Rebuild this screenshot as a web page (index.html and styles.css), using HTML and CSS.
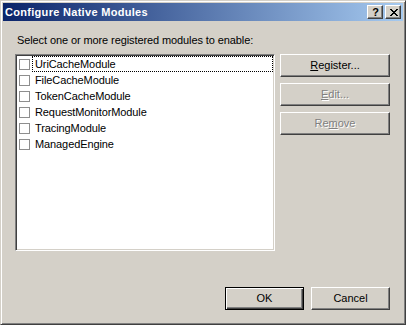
FILE: index.html
```html
<!DOCTYPE html>
<html>
<head>
<meta charset="utf-8">
<link rel="stylesheet" href="styles.css">
</head>
<body>
<div class="window">
  <div class="titlebar">
    <span class="title">Configure Native Modules</span>
    <div class="tb-buttons">
      <div class="tb-btn help">?</div>
      <div class="tb-btn close">
        <svg width="8" height="7" viewBox="0 0 8 7" shape-rendering="crispEdges">
          <path d="M0 0h2v1h-2zM6 0h2v1h-2zM1 1h2v1h-2zM5 1h2v1h-2zM2 2h4v1h-4zM3 3h2v1h-2zM2 4h4v1h-4zM1 5h2v1h-2zM5 5h2v1h-2zM0 6h2v1h-2zM6 6h2v1h-2z" fill="#000"/>
        </svg>
      </div>
    </div>
  </div>
  <div class="content">
    <div class="label">Select one or more registered modules to enable:</div>
    <div class="main">
      <div class="listbox">
        <div class="row"><span class="check"></span><span class="text focus">UriCacheModule</span></div>
        <div class="row"><span class="check"></span><span class="text">FileCacheModule</span></div>
        <div class="row"><span class="check"></span><span class="text">TokenCacheModule</span></div>
        <div class="row"><span class="check"></span><span class="text">RequestMonitorModule</span></div>
        <div class="row"><span class="check"></span><span class="text">TracingModule</span></div>
        <div class="row"><span class="check"></span><span class="text">ManagedEngine</span></div>
      </div>
      <div class="side">
        <div class="btn"><span><u>R</u>egister...</span></div>
        <div class="btn disabled"><span><u>E</u>dit...</span></div>
        <div class="btn disabled"><span>Re<u>m</u>ove</span></div>
      </div>
    </div>
    <div class="footer">
      <div class="btn default"><span>OK</span></div>
      <div class="btn footer-btn"><span>Cancel</span></div>
    </div>
  </div>
</div>
</body>
</html>
```

FILE: styles.css
```css
html, body {
  margin: 0;
  padding: 0;
  background: #d4d0c8;
}

.window {
  box-sizing: border-box;
  width: 406px;
  height: 325px;
  background: #d4d0c8;
  border: 1px solid;
  border-color: #d4d0c8 #404040 #404040 #d4d0c8;
  box-shadow: inset 1px 1px #ffffff, inset -1px -1px #808080;
  padding: 2px;
  display: flex;
  flex-direction: column;
  font-family: "Liberation Sans", Arial, sans-serif;
  font-size: 11px;
  color: #000;
}

.titlebar {
  height: 18px;
  background: linear-gradient(to right, #0a246a, #a6caf0);
  display: flex;
  align-items: center;
  justify-content: space-between;
  padding: 0 2px 0 2px;
}

.title {
  color: #fff;
  font-weight: bold;
  font-size: 11px;
  letter-spacing: 0.3px;
}

.tb-buttons {
  display: flex;
  gap: 2px;
}

.tb-btn {
  box-sizing: border-box;
  width: 16px;
  height: 14px;
  background: #d4d0c8;
  border: 1px solid;
  border-color: #fff #404040 #404040 #fff;
  box-shadow: inset -1px -1px #808080;
  display: flex;
  align-items: center;
  justify-content: center;
  font-weight: bold;
  font-size: 11px;
  line-height: 1;
}

.help {
  padding-left: 1px;
}

.close svg {
  display: block;
  margin-left: 1px;
}

.content {
  flex: 1;
  display: flex;
  flex-direction: column;
  padding: 12px 13px 12px 12px;
}

.label {
  line-height: 13px;
  margin-left: 2px;
  padding-top: 1px;
  letter-spacing: -0.1px;
}

.main {
  display: flex;
  gap: 5px;
  margin-top: 7px;
}

.listbox {
  box-sizing: border-box;
  width: 260px;
  height: 197px;
  background: #fff;
  border: 1px solid;
  border-color: #808080 #fff #fff #808080;
  box-shadow: inset 1px 1px #404040, inset -1px -1px #d4d0c8;
  padding: 1px;
}

.row {
  height: 16px;
  display: flex;
  align-items: center;
}

.check {
  box-sizing: border-box;
  width: 11px;
  height: 11px;
  border: 1px solid #8e8e8e;
  margin-left: 2px;
  margin-right: 2px;
  margin-top: 1px;
  background: #fff;
}

.text {
  box-sizing: border-box;
  flex: 1;
  height: 16px;
  line-height: 15px;
  padding-left: 2px;
  border: 1px solid transparent;
  letter-spacing: -0.1px;
}

.text.focus {
  border: 1px dotted #000;
}

.side {
  display: flex;
  flex-direction: column;
  gap: 6px;
}

.btn {
  box-sizing: border-box;
  width: 110px;
  height: 23px;
  background: #d4d0c8;
  border: 1px solid;
  border-color: #fff #404040 #404040 #fff;
  box-shadow: inset -1px -1px #808080;
  display: flex;
  align-items: center;
  justify-content: center;
  line-height: 13px;
}

.btn.disabled {
  color: #808080;
  text-shadow: 1px 1px #fff;
}

.footer {
  margin-top: auto;
  display: flex;
  justify-content: flex-end;
  gap: 7px;
}

.footer .btn {
  width: 79px;
}

.btn.default {
  border: 1px solid #000;
  box-shadow: inset 1px 1px #fff, inset -1px -1px #404040, inset -2px -2px #808080;
}
```
